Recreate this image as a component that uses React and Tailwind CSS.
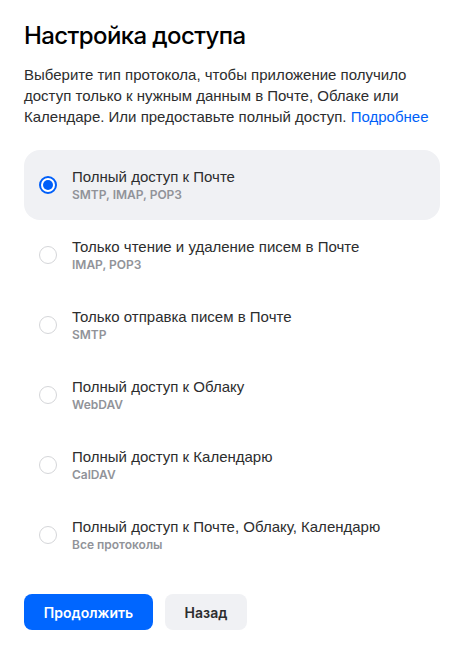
import React from 'react';

const options = [
  { title: 'Полный доступ к Почте', sub: 'SMTP, IMAP, POP3' },
  { title: 'Только чтение и удаление писем в Почте', sub: 'IMAP, POP3' },
  { title: 'Только отправка писем в Почте', sub: 'SMTP' },
  { title: 'Полный доступ к Облаку', sub: 'WebDAV' },
  { title: 'Полный доступ к Календарю', sub: 'CalDAV' },
  { title: 'Полный доступ к Почте, Облаку, Календарю', sub: 'Все протоколы' },
];

const App = () => {
  const [selected, setSelected] = React.useState(0);

  return (
    <div className="w-[460px] min-h-[654px] bg-white pl-6 pr-5 pt-5 font-['Liberation_Sans',Arial,sans-serif] text-[#2c2d2e]">
      <h1 className="font-['Inter',sans-serif] text-[24px] leading-[32px] font-medium tracking-[-0.6px] text-[#000]">Настройка доступа</h1>

      <p className="mt-3 pr-1 text-[15px] leading-[21px] text-[#2c2d2e]">
        Выберите тип протокола, чтобы приложение получило доступ только к нужным данным в Почте, Облаке или Календаре. Или предоставьте полный доступ.{' '}
        <a href="#" className="text-[#005ff9]">Подробнее</a>
      </p>

      <div className="mt-[23px] flex flex-col">
        {options.map((item, index) => (
          <label
            key={index}
            onClick={() => setSelected(index)}
            className={`flex h-[70px] items-center gap-[15px] rounded-2xl pl-[15px] cursor-pointer ${selected === index ? 'bg-[#f0f1f4]' : ''}`}
          >
            {selected === index ? (
              <span className="flex h-[18px] w-[18px] shrink-0 items-center justify-center rounded-full border-2 border-[#005ff9] bg-white">
                <span className="h-[10px] w-[10px] rounded-full bg-[#005ff9]" />
              </span>
            ) : (
              <span className="h-[18px] w-[18px] shrink-0 rounded-full border-[1.5px] border-[#d5d6d9] bg-white" />
            )}
            <span className="flex flex-col">
              <span className="text-[15px] leading-[20px] text-[#2c2d2e]">{item.title}</span>
              <span className="font-['Inter',sans-serif] text-[12px] leading-[16px] font-semibold text-[#919399]">{item.sub}</span>
            </span>
          </label>
        ))}
      </div>

      <div className="mt-6 flex gap-3 font-['Inter',sans-serif]">
        <button className="h-9 w-[129px] rounded-lg bg-[#0066ff] text-[14px] font-semibold text-white">Продолжить</button>
        <button className="h-9 w-[82px] rounded-lg bg-[#f0f1f4] text-[14px] font-semibold text-[#2c2d2e]">Назад</button>
      </div>
    </div>
  );
};

export default App;
